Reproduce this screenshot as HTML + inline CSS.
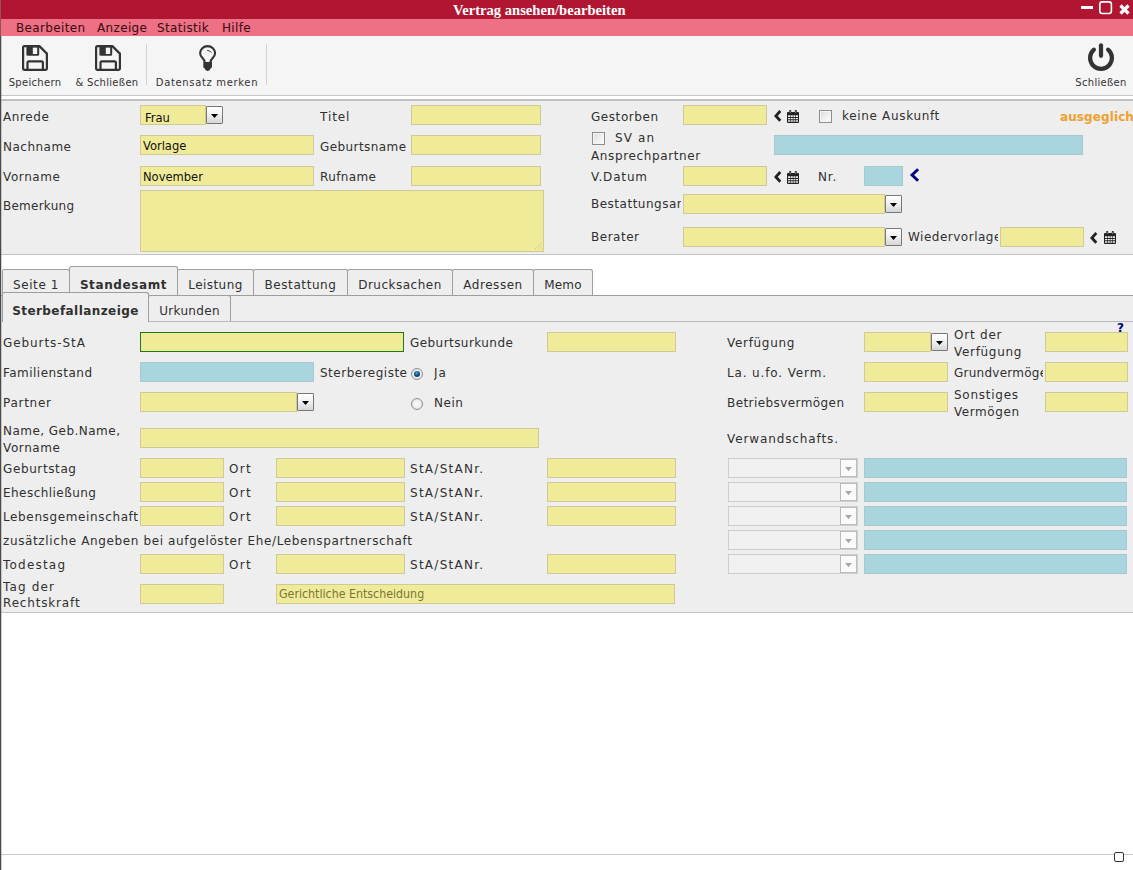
<!DOCTYPE html>
<html lang="de">
<head>
<meta charset="utf-8">
<title>Vertrag ansehen/bearbeiten</title>
<style>
html,body{margin:0;padding:0}
body{width:1133px;height:870px;overflow:hidden;background:#fff;position:relative;font-family:"DejaVu Sans","Liberation Sans",sans-serif;font-size:13px;color:#303030}
.a{position:absolute}
#edge{left:0;top:0;width:1px;height:870px;background:linear-gradient(#96505c 0,#96505c 36px,#4a4a4a 36px);z-index:50}
#edge2{left:1px;top:36px;width:1px;height:834px;background:rgba(120,120,120,.35);z-index:50}
#title{left:0;top:0;width:1133px;height:19px;background:#b01631}
#title span{position:absolute;left:453px;top:2px;font-family:"Liberation Serif",serif;font-weight:bold;font-size:14.6px;line-height:17px;color:#fff;white-space:nowrap}
#menu{left:0;top:19px;width:1133px;height:17px;background:#ee7084}
#menu span{position:absolute;top:1px;line-height:17px;font-size:12px;letter-spacing:.35px;color:#3a0810;white-space:nowrap}
#tool{left:0;top:36px;width:1133px;height:59px;background:#f5f5f5;border-bottom:1px solid #c6c6c6}
.tl{position:absolute;top:39px;font-size:10px;letter-spacing:.3px;line-height:14px;color:#333;white-space:nowrap;text-align:center}
.sep{position:absolute;top:8px;width:1px;height:41px;background:#d2d2d2}
#p1{left:0;top:99px;width:1133px;height:153px;background:#eeeeee;border-top:2px solid #c0c0c0;border-bottom:1px solid #c3c3c3}
#p2{left:0;top:296px;width:1133px;height:316px;background:#eeeeee;border-bottom:1px solid #c3c3c3}
.l{position:absolute;white-space:nowrap;line-height:16px;font-size:12px;letter-spacing:.5px;overflow:hidden}
.i{position:absolute;box-sizing:border-box;height:20px;border:1px solid #cfca98;background:#f0eb98;font-family:"DejaVu Sans Condensed","Liberation Sans",sans-serif;font-size:12.8px;line-height:19px;color:#111;padding-left:2px;white-space:nowrap}
.b{background:#a9d6de;border-color:#a8c8cc}
.sb{position:absolute;box-sizing:border-box;width:17px;height:18px;border:1px solid #777;border-radius:1px;background:linear-gradient(#fff 0%,#f2f2f2 45%,#d6d6d6 100%)}
.sb:after{content:"";position:absolute;left:4px;top:7px;width:7px;height:4px;background:#000;clip-path:polygon(0 0,100% 0,50% 100%)}
.ds{position:absolute;box-sizing:border-box;height:20px;width:130px;border:1px solid #cdcdcd;background:#f0f0f0}
.ds i{position:absolute;right:0;top:0;width:17px;height:18px;box-sizing:border-box;border:1px solid #bcbcbc;background:#fafafa}
.ds i:after{content:"";position:absolute;left:4px;top:7px;width:7px;height:4px;background:#a6a6a6;clip-path:polygon(0 0,100% 0,50% 100%)}
.cb{position:absolute;box-sizing:border-box;width:13px;height:13px;border:1px solid #8e8e8e;background:linear-gradient(135deg,#dcdcdc,#fff);box-shadow:inset 0 0 0 1px #f4f4f4}
.rb b{position:absolute;left:2px;top:2px;width:6px;height:6px;border-radius:50%;background:radial-gradient(circle at 45% 35%,#56b0e6 0,#115083 45%,#072c4a 100%)}
.rb{position:absolute;box-sizing:border-box;width:12px;height:12px;border:1px solid #8e8e8e;border-radius:50%;background:radial-gradient(#fff,#ddd)}
.tab{position:absolute;box-sizing:border-box;border:1px solid #9e9e9e;border-bottom:none;border-radius:2.5px 2.5px 0 0;background:#eeeeee;font-size:12px;letter-spacing:.5px;line-height:16px;white-space:nowrap;text-align:center}
svg{position:absolute;overflow:visible}
</style>
</head>
<body>
<div id="edge" class="a"></div><div id="edge2" class="a"></div>
<div id="title" class="a"><span>Vertrag ansehen/bearbeiten</span></div>
<div id="menu" class="a"><span style="left:16px">Bearbeiten</span><span style="left:97px">Anzeige</span><span style="left:157px">Statistik</span><span style="left:222px">Hilfe</span></div>
<div id="tool" class="a"></div>
<div id="p1" class="a"></div>
<div id="p2" class="a"></div>

<svg class="a" style="left:1081px;top:1px" width="50" height="16" viewBox="0 0 50 16"><rect x="0" y="5" width="12" height="3" fill="#fff"/><rect x="18.8" y="0.9" width="11.6" height="11.6" rx="2.4" fill="none" stroke="#fff" stroke-width="1.6"/><path d="M39.5 4.5l8 8M47.5 4.5l-8 8" stroke="#fff" stroke-width="3.2" stroke-linecap="butt"/></svg>
<svg class="a" style="left:22px;top:45px" width="26" height="26" viewBox="0 0 26 26"><g id="flop"><path d="M1.1 2.6a1.5 1.5 0 0 1 1.5-1.5H17.4L24.9 8.6V23.4a1.5 1.5 0 0 1-1.5 1.5H2.6a1.5 1.5 0 0 1-1.5-1.5z" fill="none" stroke="#333" stroke-width="2.2" stroke-linejoin="round"/><path fill-rule="evenodd" d="M4.4 1H17.2V9.2a1.5 1.5 0 0 1-1.5 1.5H5.9a1.5 1.5 0 0 1-1.5-1.5zM10.8 2.4V8.9H15.2V2.4z" fill="#333"/><path d="M5.5 25V17.6a1.2 1.2 0 0 1 1.2-1.2H19.7a1.2 1.2 0 0 1 1.2 1.2V25" fill="none" stroke="#333" stroke-width="2.2"/></g></svg>
<svg class="a" style="left:95px;top:45px" width="26" height="26" viewBox="0 0 26 26"><use href="#flop"/></svg>
<svg class="a" style="left:199px;top:45px" width="18" height="26" viewBox="0 0 18 26"><path d="M5.7 17.2C5.7 13.4 1.1 12.6 1.1 8.3A7.5 7.2 0 0 1 16.1 8.3C16.1 12.6 11.5 13.4 11.5 17.2" fill="none" stroke="#333" stroke-width="2.1"/><path d="M4.3 16.9H13V21.4Q13 23 11.6 23.6Q11 26 8.65 26Q6.3 26 5.7 23.6Q4.3 23 4.3 21.4z" fill="#333"/><path d="M8.2 5.4Q11.2 5.4 12.3 7.6" fill="none" stroke="#333" stroke-width="1"/></svg>
<svg class="a" style="left:1088px;top:43px" width="26" height="28" viewBox="0 0 26 28"><path d="M5.9 6.7A10.9 10.9 0 1 0 20.1 6.7" fill="none" stroke="#333" stroke-width="4.2" stroke-linecap="round"/><path d="M13 2.3V12.8" stroke="#333" stroke-width="4.2" stroke-linecap="round"/></svg>
<div class="tl" style="left:0;width:70px;top:76px">Speichern</div>
<div class="tl" style="left:72px;width:70px;top:76px">&amp; Schließen</div>
<div class="tl" style="left:147px;width:120px;top:76px;letter-spacing:.65px">Datensatz merken</div>
<div class="tl" style="left:1066px;width:70px;top:76px">Schließen</div>
<div class="sep" style="left:146px;top:44px"></div><div class="sep" style="left:266px;top:44px"></div>

<svg class="a" style="left:0;top:0" width="0" height="0"><defs><g id="cal"><path fill-rule="evenodd" fill="#222" d="M0 2.9a.9 .9 0 0 1 .9-.9H11.1a.9 .9 0 0 1 .9 .9V12.1a.9 .9 0 0 1-.9 .9H.9a.9 .9 0 0 1-.9-.9zM1 5.2V7H3.3V5.2zM3.9 5.2V7H5.8V5.2zM6.4 5.2V7H8.3V5.2zM8.9 5.2V7H11V5.2zM1 8V9.2H3.3V8zM3.9 8V9.2H5.8V8zM6.4 8V9.2H8.3V8zM8.9 8V9.2H11V8zM1 10.2V11.8H3.3V10.2zM3.9 10.2V11.8H5.8V10.2zM6.4 10.2V11.8H8.3V10.2zM8.9 10.2V11.8H11V10.2z"/><rect x="2.2" y="0" width="2" height="3" rx=".8" fill="#222"/><rect x="7.8" y="0" width="2" height="3" rx=".8" fill="#222"/><rect x="2.8" y="1.4" width=".8" height="1.4" fill="#ccc"/><rect x="8.4" y="1.4" width=".8" height="1.4" fill="#ccc"/></g></defs></svg>
<div class="l" style="left:3px;top:109px;letter-spacing:0.62px">Anrede</div>
<div class="l" style="left:3px;top:139px;letter-spacing:0.49px">Nachname</div>
<div class="l" style="left:3px;top:169px;letter-spacing:0.6px">Vorname</div>
<div class="l" style="left:3px;top:198px;letter-spacing:0.25px">Bemerkung</div>
<div class="i" style="left:140px;top:105px;width:66px;padding-left:4px;line-height:24px">Frau</div><div class="sb" style="left:206px;top:106px"></div>
<div class="i" style="left:140px;top:135px;width:174px">Vorlage</div>
<div class="i" style="left:140px;top:166px;width:174px">November</div>
<div class="i" style="left:140px;top:190px;width:404px;height:62px"></div>
<svg class="a" style="left:534px;top:242px" width="8" height="8" viewBox="0 0 8 8"><path d="M7.5 .5L.5 7.5M7.5 3.5L3.5 7.5M7.5 6.3L6.3 7.5" stroke="#bdb98a" stroke-width="1" stroke-dasharray="1 1"/></svg>
<div class="l" style="left:320px;top:109px;letter-spacing:0.92px">Titel</div>
<div class="l" style="left:320px;top:139px;letter-spacing:0.42px">Geburtsname</div>
<div class="l" style="left:320px;top:169px;letter-spacing:0.39px">Rufname</div>
<div class="i" style="left:411px;top:105px;width:130px"></div>
<div class="i" style="left:411px;top:135px;width:130px"></div>
<div class="i" style="left:411px;top:166px;width:130px"></div>
<div class="l" style="left:591px;top:109px;letter-spacing:0.56px">Gestorben</div>
<div class="i" style="left:683px;top:105px;width:84px"></div>
<svg class="a" style="left:774px;top:110px" width="8" height="12" viewBox="0 0 8 12"><path d="M6.3 1L1.9 5.9l4.4 4.9" fill="none" stroke="#222" stroke-width="2.8"/></svg><svg class="a" style="left:787px;top:110px" width="12" height="13" viewBox="0 0 12 13"><use href="#cal"/></svg>
<div class="cb" style="left:819px;top:110px"></div>
<div class="l" style="left:842px;top:108px;letter-spacing:0.67px">keine Auskunft</div>
<div class="l" style="left:1060px;top:109px;font-weight:bold;color:#f0a02c;letter-spacing:.1px">ausgeglichen</div>
<div class="cb" style="left:592px;top:132px"></div>
<div class="l" style="left:615px;top:130px;letter-spacing:1.1px">SV an</div>
<div class="l" style="left:591px;top:148px;letter-spacing:0.63px">Ansprechpartner</div>
<div class="i b" style="left:774px;top:135px;width:309px"></div>
<div class="l" style="left:591px;top:169px;letter-spacing:0.82px">V.Datum</div>
<div class="i" style="left:683px;top:166px;width:84px"></div>
<svg class="a" style="left:774px;top:171px" width="8" height="12" viewBox="0 0 8 12"><path d="M6.3 1L1.9 5.9l4.4 4.9" fill="none" stroke="#222" stroke-width="2.8"/></svg><svg class="a" style="left:787px;top:171px" width="12" height="13" viewBox="0 0 12 13"><use href="#cal"/></svg>
<div class="l" style="left:818px;top:169px;letter-spacing:0.84px">Nr.</div>
<div class="i b" style="left:864px;top:166px;width:39px"></div>
<svg class="a" style="left:910px;top:168px" width="10" height="14" viewBox="0 0 10 14"><path d="M8.1 1.2L2 7l6.1 5.8" fill="none" stroke="#000080" stroke-width="2.9"/></svg>
<div class="l" style="left:591px;top:196px;width:90px">Bestattungsart</div>
<div class="i" style="left:683px;top:194px;width:202px"></div><div class="sb" style="left:885px;top:195px"></div>
<div class="l" style="left:591px;top:229px;letter-spacing:0.51px">Berater</div>
<div class="i" style="left:683px;top:227px;width:202px"></div><div class="sb" style="left:885px;top:228px"></div>
<div class="l" style="left:908px;top:229px;width:90px">Wiedervorlage</div>
<div class="i" style="left:1000px;top:227px;width:84px"></div>
<svg class="a" style="left:1090px;top:232px" width="8" height="12" viewBox="0 0 8 12"><path d="M6.3 1L1.9 5.9l4.4 4.9" fill="none" stroke="#222" stroke-width="2.8"/></svg><svg class="a" style="left:1104px;top:231px" width="12" height="13" viewBox="0 0 12 13"><use href="#cal"/></svg>

<div class="a" style="left:0;top:295px;width:1133px;height:1px;background:#9d9d9d"></div>
<div class="tab" style="left:2px;top:269px;width:68px;height:26px;padding-top:7px;letter-spacing:0.59px">Seite 1</div>
<div class="tab" style="left:69px;top:266px;width:109px;height:30px;padding-top:10px;font-weight:bold;z-index:3;letter-spacing:0.6px">Standesamt</div>
<div class="tab" style="left:177px;top:269px;width:77px;height:26px;padding-top:7px;letter-spacing:0.44px">Leistung</div>
<div class="tab" style="left:253px;top:269px;width:95px;height:26px;padding-top:7px;letter-spacing:0.58px">Bestattung</div>
<div class="tab" style="left:347px;top:269px;width:106px;height:26px;padding-top:7px;letter-spacing:0.5px">Drucksachen</div>
<div class="tab" style="left:452px;top:269px;width:82px;height:26px;padding-top:7px;letter-spacing:0.55px">Adressen</div>
<div class="tab" style="left:533px;top:269px;width:60px;height:26px;padding-top:7px;letter-spacing:0.2px">Memo</div>
<div class="a" style="left:148px;top:321px;width:985px;height:1px;background:#b9b9b9;z-index:4"></div>
<div class="tab" style="left:2px;top:292px;width:147px;height:30px;padding-top:10px;font-weight:bold;z-index:6;letter-spacing:0.43px">Sterbefallanzeige</div>
<div class="tab" style="left:148px;top:295px;width:83px;height:26px;padding-top:7px;z-index:5;letter-spacing:0.32px">Urkunden</div>

<div class="l" style="left:3px;top:335px;letter-spacing:0.93px">Geburts-StA</div>
<div class="i" style="left:140px;top:332px;width:264px;border-color:#1e7a16"></div>
<div class="l" style="left:410px;top:335px;letter-spacing:0.44px">Geburtsurkunde</div>
<div class="i" style="left:547px;top:332px;width:129px"></div>
<div class="l" style="left:3px;top:365px;letter-spacing:0.47px">Familienstand</div>
<div class="i b" style="left:140px;top:362px;width:174px"></div>
<div class="l" style="left:320px;top:365px;width:88px">Sterberegister</div>
<div class="rb" style="left:411px;top:368px"><b></b></div>
<div class="l" style="left:434px;top:365px;letter-spacing:.9px">Ja</div>
<div class="l" style="left:3px;top:395px;letter-spacing:0.73px">Partner</div>
<div class="i" style="left:140px;top:392px;width:157px"></div>
<div class="sb" style="left:297px;top:393px"></div>
<div class="rb" style="left:411px;top:398px"></div>
<div class="l" style="left:434px;top:395px;letter-spacing:0.56px">Nein</div>
<div class="l" style="left:3px;top:423px;letter-spacing:0.47px">Name, Geb.Name,</div>
<div class="l" style="left:3px;top:440px;letter-spacing:0.6px">Vorname</div>
<div class="i" style="left:140px;top:428px;width:399px"></div>
<div class="l" style="left:3px;top:461px;letter-spacing:0.61px">Geburtstag</div>
<div class="i" style="left:140px;top:458px;width:84px"></div>
<div class="l" style="left:229px;top:461px;letter-spacing:1.3px">Ort</div>
<div class="i" style="left:276px;top:458px;width:129px"></div>
<div class="l" style="left:410px;top:461px;letter-spacing:1.27px">StA/StANr.</div>
<div class="i" style="left:547px;top:458px;width:129px"></div>
<div class="l" style="left:3px;top:485px;letter-spacing:0.46px">Eheschließung</div>
<div class="i" style="left:140px;top:482px;width:84px"></div>
<div class="l" style="left:229px;top:485px;letter-spacing:1.3px">Ort</div>
<div class="i" style="left:276px;top:482px;width:129px"></div>
<div class="l" style="left:410px;top:485px;letter-spacing:1.27px">StA/StANr.</div>
<div class="i" style="left:547px;top:482px;width:129px"></div>
<div class="l" style="left:3px;top:509px;letter-spacing:0.63px">Lebensgemeinschaft</div>
<div class="i" style="left:140px;top:506px;width:84px"></div>
<div class="l" style="left:229px;top:509px;letter-spacing:1.3px">Ort</div>
<div class="i" style="left:276px;top:506px;width:129px"></div>
<div class="l" style="left:410px;top:509px;letter-spacing:1.27px">StA/StANr.</div>
<div class="i" style="left:547px;top:506px;width:129px"></div>
<div class="l" style="left:3px;top:557px;letter-spacing:1.21px">Todestag</div>
<div class="i" style="left:140px;top:554px;width:84px"></div>
<div class="l" style="left:229px;top:557px;letter-spacing:1.3px">Ort</div>
<div class="i" style="left:276px;top:554px;width:129px"></div>
<div class="l" style="left:410px;top:557px;letter-spacing:1.27px">StA/StANr.</div>
<div class="i" style="left:547px;top:554px;width:129px"></div>
<div class="l" style="left:3px;top:533px;letter-spacing:0.63px">zusätzliche Angeben bei aufgelöster Ehe/Lebenspartnerschaft</div>
<div class="l" style="left:3px;top:579px;letter-spacing:1.16px">Tag der</div>
<div class="l" style="left:3px;top:595px;letter-spacing:0.83px">Rechtskraft</div>
<div class="i" style="left:140px;top:584px;width:84px"></div>
<div class="i" style="left:276px;top:584px;width:399px;color:#78753a;font-size:12.3px">Gerichtliche Entscheidung</div>
<div class="l" style="left:727px;top:335px;letter-spacing:0.69px">Verfügung</div>
<div class="i" style="left:864px;top:332px;width:67px"></div>
<div class="sb" style="left:931px;top:333px"></div>
<div class="l" style="left:954px;top:327px;letter-spacing:0.78px">Ort der</div>
<div class="l" style="left:954px;top:344px;letter-spacing:0.69px">Verfügung</div>
<div class="i" style="left:1045px;top:332px;width:83px"></div>
<div class="l" style="left:727px;top:365px;letter-spacing:0.86px">La. u.fo. Verm.</div>
<div class="i" style="left:864px;top:362px;width:84px"></div>
<div class="l" style="left:954px;top:365px;width:89px;letter-spacing:.25px">Grundvermögen</div>
<div class="i" style="left:1045px;top:362px;width:83px"></div>
<div class="l" style="left:727px;top:395px;letter-spacing:0.42px">Betriebsvermögen</div>
<div class="i" style="left:864px;top:392px;width:84px"></div>
<div class="l" style="left:954px;top:387px;letter-spacing:0.74px">Sonstiges</div>
<div class="l" style="left:954px;top:404px;letter-spacing:0.57px">Vermögen</div>
<div class="i" style="left:1045px;top:392px;width:83px"></div>
<div class="l" style="left:727px;top:431px;letter-spacing:0.89px">Verwandschafts.</div>
<div class="ds" style="left:728px;top:458px"><i></i></div>
<div class="i b" style="left:864px;top:458px;width:263px"></div>
<div class="ds" style="left:728px;top:482px"><i></i></div>
<div class="i b" style="left:864px;top:482px;width:263px"></div>
<div class="ds" style="left:728px;top:506px"><i></i></div>
<div class="i b" style="left:864px;top:506px;width:263px"></div>
<div class="ds" style="left:728px;top:530px"><i></i></div>
<div class="i b" style="left:864px;top:530px;width:263px"></div>
<div class="ds" style="left:728px;top:554px"><i></i></div>
<div class="i b" style="left:864px;top:554px;width:263px"></div>
<div class="l" style="left:1117px;top:320px;font-weight:bold;font-size:12px;color:#000080">?</div>

<div class="a" style="left:0;top:854px;width:1133px;height:1px;background:#c8c8c8"></div>
<div class="a" style="left:1114px;top:852px;width:10px;height:10px;box-sizing:border-box;border:1.5px solid #333;border-radius:2px;background:#fff"></div>
</body>
</html>
